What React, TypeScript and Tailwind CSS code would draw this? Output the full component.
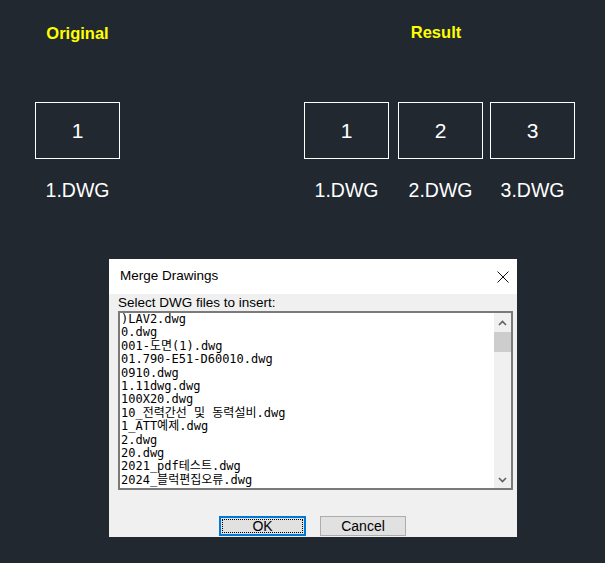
import React from "react";

const files = [
  ")LAV2.dwg",
  "0.dwg",
  "001-도면(1).dwg",
  "01.790-E51-D60010.dwg",
  "0910.dwg",
  "1.11dwg.dwg",
  "100X20.dwg",
  "10_전력간선 및 동력설비.dwg",
  "1_ATT예제.dwg",
  "2.dwg",
  "20.dwg",
  "2021_pdf테스트.dwg",
  "2024_블럭편집오류.dwg",
];

function Box({ n }: { n: string }) {
  return (
    <div className="w-[85px] h-[57px] border border-white flex items-center justify-center text-white text-[21px] leading-none">
      {n}
    </div>
  );
}

function Label({ t }: { t: string }) {
  return <div className="mt-[20px] h-[22px] leading-[22px] text-[19.5px] text-white whitespace-nowrap">{t}</div>;
}

function Chevron({ down }: { down?: boolean }) {
  return (
    <svg width="9" height="6" viewBox="0 0 9 6" className={down ? "rotate-180" : ""}>
      <path d="M1 5 L4.5 1.5 L8 5" fill="none" stroke="#606060" strokeWidth="1.6" />
    </svg>
  );
}

export default function App() {
  return (
    <div
      className="w-[605px] h-[563px] bg-[#212830] overflow-hidden"
      style={{ fontFamily: '"Liberation Sans", Arial, sans-serif' }}
    >
      <div className="flex h-[259px] pl-[35px]">
        <div className="flex flex-col items-center w-[85px]">
          <div className="mt-[24px] h-[18px] leading-[18px] text-[16.5px] font-bold text-[#ffff00]">Original</div>
          <div className="mt-[60px]">
            <Box n="1" />
          </div>
          <Label t="1.DWG" />
        </div>
        <div className="ml-[184px] flex flex-col items-center">
          <div className="mt-[23px] mr-[7px] h-[18px] leading-[18px] text-[16.5px] font-bold text-[#ffff00]">Result</div>
          <div className="flex mt-[61px]">
            <div className="flex flex-col items-center">
              <Box n="1" />
              <Label t="1.DWG" />
            </div>
            <div className="flex flex-col items-center ml-[9px]">
              <Box n="2" />
              <Label t="2.DWG" />
            </div>
            <div className="flex flex-col items-center ml-[7px]">
              <Box n="3" />
              <Label t="3.DWG" />
            </div>
          </div>
        </div>
      </div>

      <div className="ml-[109px] w-[408px] h-[278px] bg-[#f0f0f0] flex flex-col">
        <div className="h-[35px] bg-white flex items-center justify-between pl-[11px] pr-[8px]">
          <span className="text-[13.5px] text-black">Merge Drawings</span>
          <svg width="12" height="12" viewBox="0 0 12 12">
            <path d="M0.5 0.5 L11.5 11.5 M11.5 0.5 L0.5 11.5" stroke="#111" strokeWidth="1" />
          </svg>
        </div>
        <div className="flex flex-col pl-[9px]">
          <div className="h-[17px] leading-[17px] text-[13.5px] text-black whitespace-nowrap">
            Select DWG files to insert:
          </div>
          <div className="w-[395px] h-[179px] border-2 border-[#7a7a7a] bg-white flex">
            <div
              className="flex-1 overflow-hidden pl-[1px] text-[12px] leading-[13.4px] text-black"
              style={{ fontFamily: '"DejaVu Sans Mono", "Noto Sans CJK KR", monospace' }}
            >
              {files.map((f) => (
                <div key={f} className="whitespace-pre h-[13.4px]">
                  {f}
                </div>
              ))}
            </div>
            <div className="w-[17px] bg-[#f0f0f0] flex flex-col">
              <div className="h-[19px] flex items-center justify-center">
                <Chevron />
              </div>
              <div className="h-[20px] bg-[#cdcdcd]" />
              <div className="flex-1" />
              <div className="h-[17px] flex items-center justify-center">
                <Chevron down />
              </div>
            </div>
          </div>
          <div className="flex mt-[26px] ml-[101px]">
            <div className="relative w-[87px] h-[20px] border-2 border-[#0078d7] bg-[#e1e1e1] flex items-center justify-center text-[14px] text-black">
              <div className="absolute inset-[1px] border border-dotted border-black" />
              OK
            </div>
            <div className="ml-[14px] w-[86px] h-[20px] border border-[#adadad] bg-[#e1e1e1] flex items-center justify-center text-[14px] text-black">
              Cancel
            </div>
          </div>
        </div>
      </div>
    </div>
  );
}
